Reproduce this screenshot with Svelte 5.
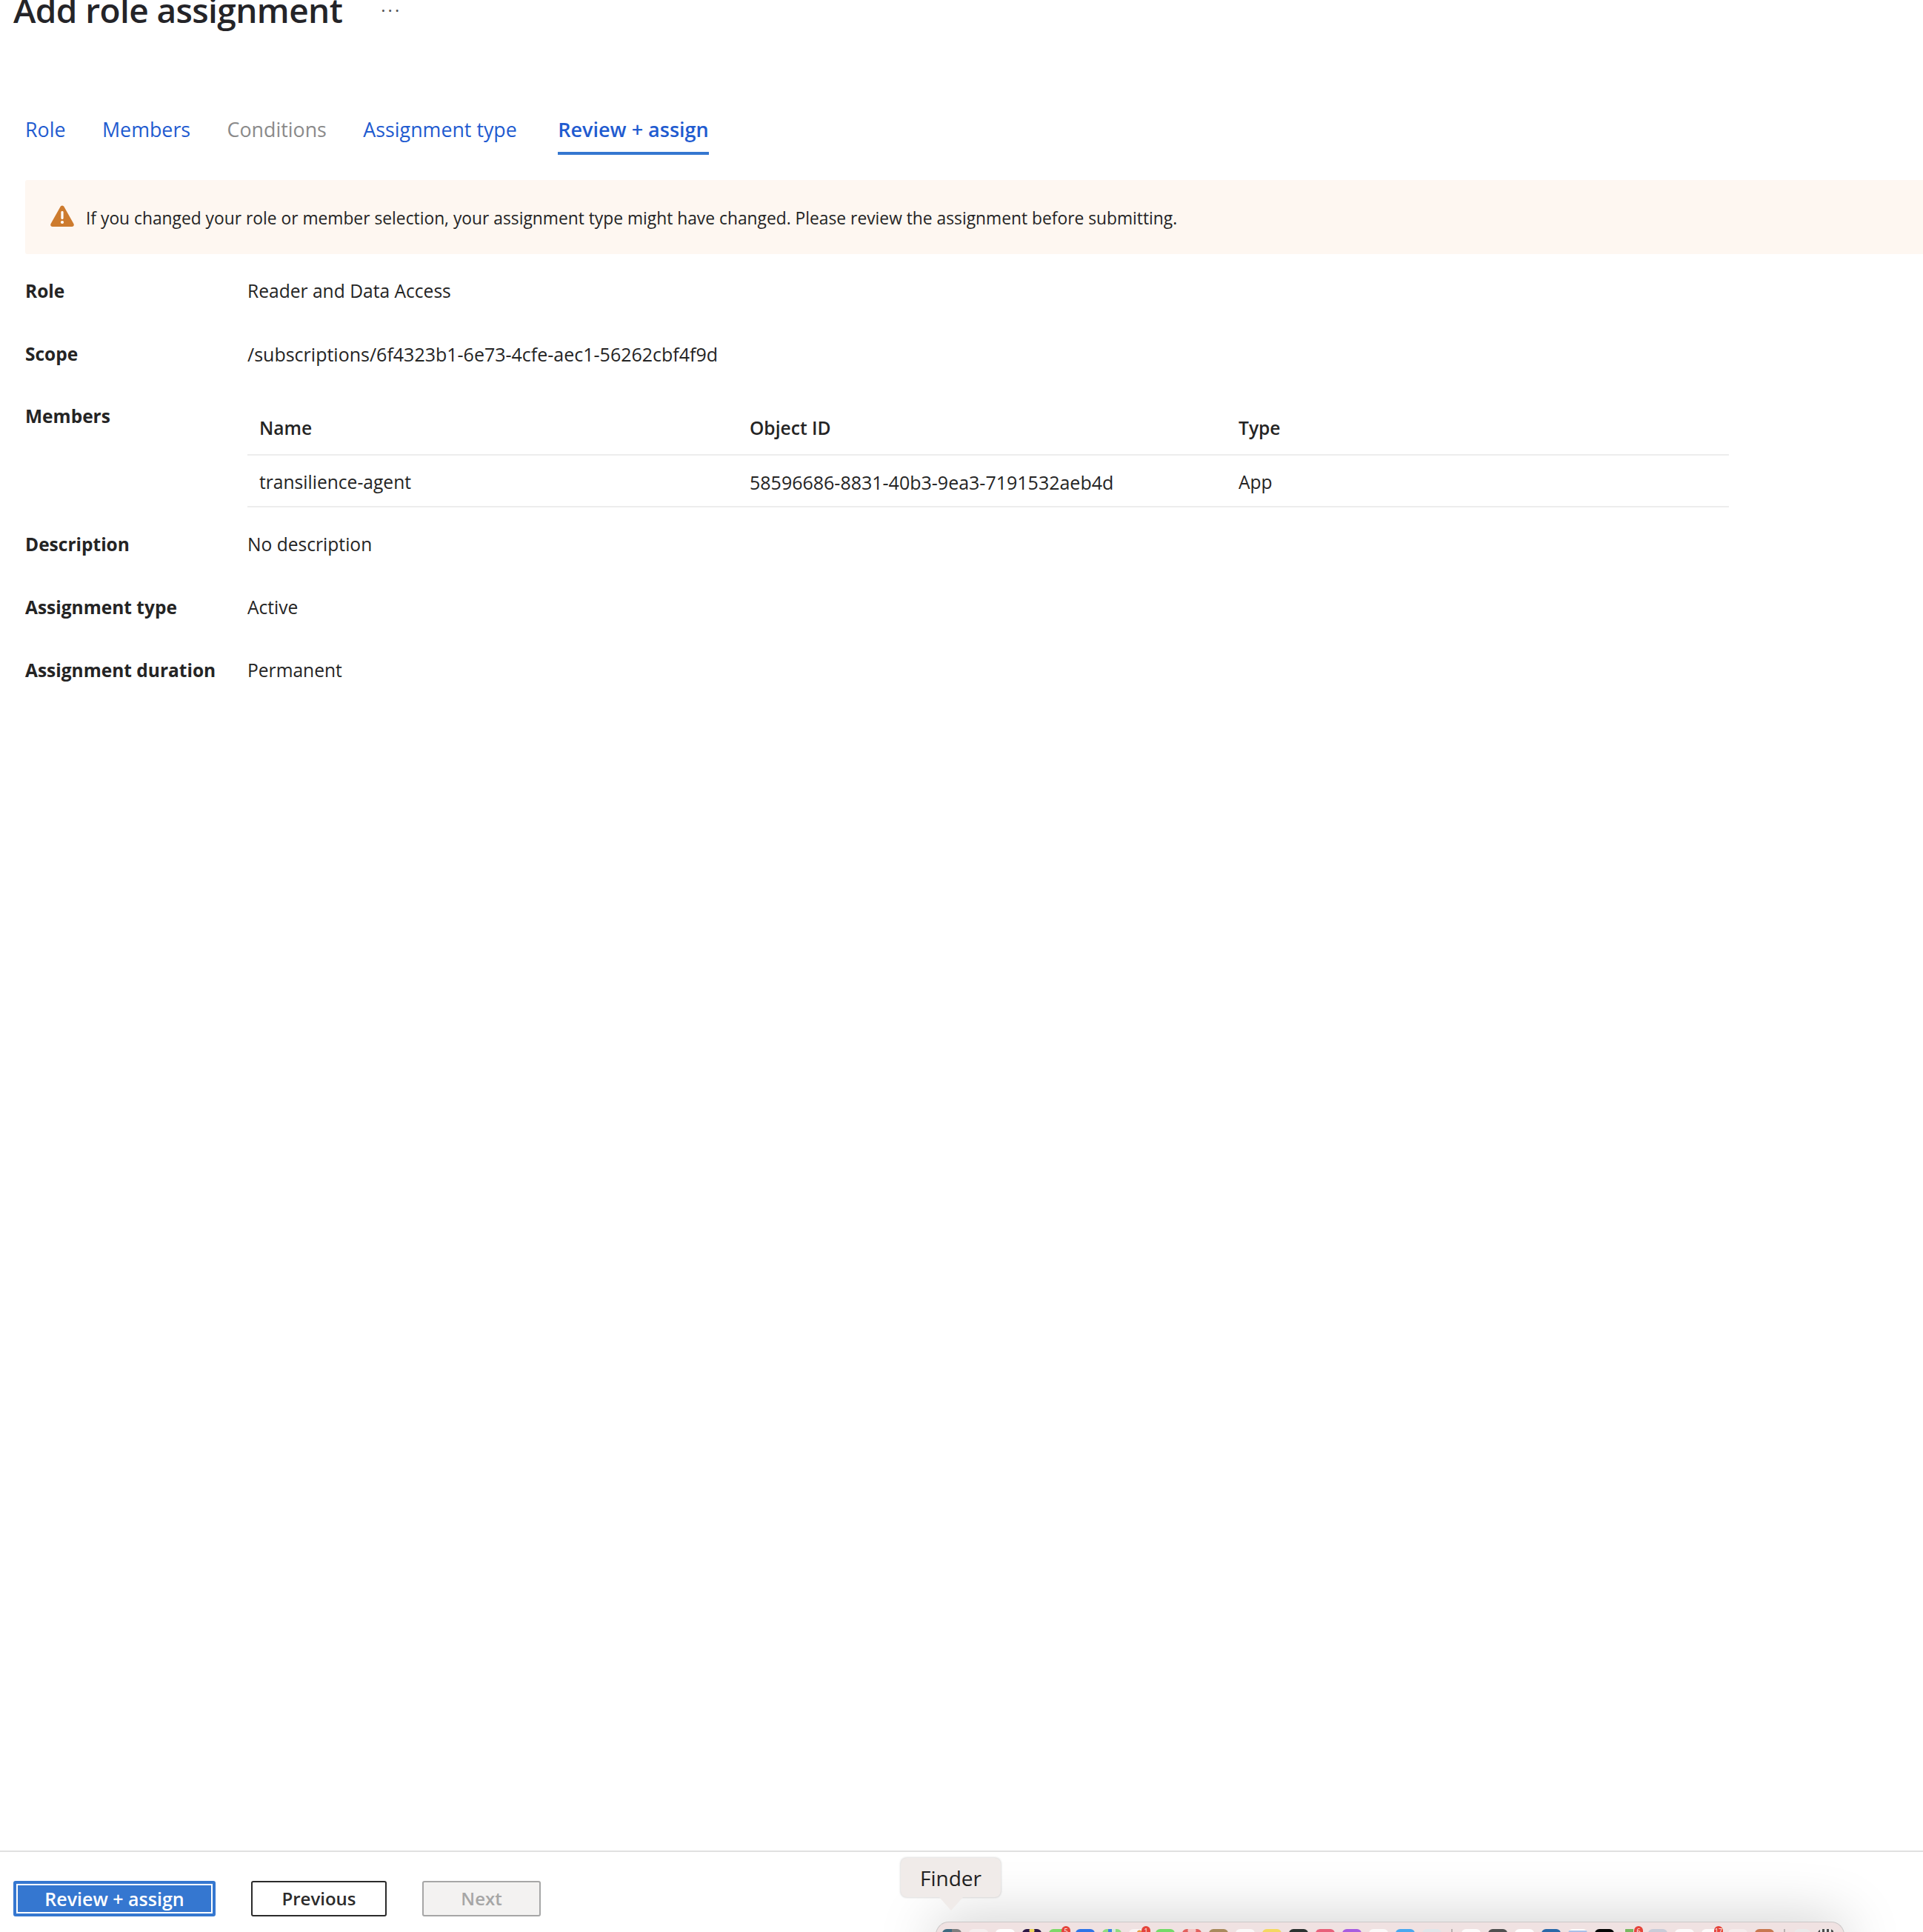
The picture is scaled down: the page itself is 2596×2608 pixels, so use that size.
<script lang="ts">
	// タブとレビュー内容のデータ
	const tabs = [
		{ label: 'Role', kind: 'link' },
		{ label: 'Members', kind: 'link' },
		{ label: 'Conditions', kind: 'off' },
		{ label: 'Assignment type', kind: 'link' },
		{ label: 'Review + assign', kind: 'active' }
	];

	// Dock のアイコン（画面下端で上の数ピクセルだけ見えている）
	type DockItem = { bg?: string; badge?: string; sep?: boolean; w?: number };

	const dock: DockItem[] = [
		{ bg: 'linear-gradient(90deg, #3e6a80 50%, #7e7e7e 50%)' },
		{ bg: '#f5efef' },
		{ bg: 'radial-gradient(circle at 50% 130%, #5a9ad8 0 10px, #fff 11px)' },
		{ bg: 'radial-gradient(circle at 50% 2px, #f0d860 0 3px, #2a1646 4px)' },
		{ bg: '#7ed868', badge: '5' },
		{ bg: '#2f74e8' },
		{ bg: 'linear-gradient(90deg, #8edc80 0 30%, #3a80e8 30% 50%, #d8e8d8 50% 70%, #8edc80 70%)' },
		{ bg: 'radial-gradient(circle at 55% 5px, #e89840 0 3px, #f8f4f4 4px)', badge: '1' },
		{ bg: '#74da68' },
		{ bg: 'radial-gradient(circle at 50% 2px, #f4c8c8 0 5px, #e25f5c 6px)' },
		{ bg: '#a88a5c' },
		{ bg: '#fbf9f9' },
		{ bg: '#f4d860' },
		{ bg: '#2c3230' },
		{ bg: '#e8607a' },
		{ bg: 'radial-gradient(circle at 50% 130%, #8040c0 0 8px, #a85ce0 9px)' },
		{ bg: '#fbf9f9' },
		{ bg: '#4aa8f0' },
		{ bg: 'radial-gradient(circle at 50% 130%, #222 0 10px, #dfe6ea 11px)' },
		{ sep: true },
		{ bg: '#fdfbfb' },
		{ bg: '#505050' },
		{ bg: 'radial-gradient(circle at 50% 130%, #111 0 10px, #fff 11px)' },
		{ bg: '#2a68a8' },
		{ bg: 'linear-gradient(#fff 0 2px, #a8c0e8 2px)' },
		{ bg: '#050505' },
		{ bg: 'linear-gradient(90deg, #f0e4e4 18%, #78b860 18% 60%, #f0e4e4 60%)', badge: '6' },
		{ bg: 'radial-gradient(circle at 50% 130%, #8c98c0 0 10px, #c8ccd8 11px)' },
		{ bg: '#fdfbfb' },
		{ bg: '#fdfbfb', badge: '17' },
		{ bg: '#f5eded' },
		{ bg: '#c87850' },
		{ sep: true },
		{ bg: '#eaeaea', w: 22 },
		{ bg: 'repeating-linear-gradient(90deg, #4a4a4a 0 3px, #e8e8e8 3px 6px)', w: 22 }
	];
</script>

<div class="page">
	<header class="title-row">
		<h1>Add role assignment</h1>
		<span class="more">···</span>
	</header>

	<nav class="tabs">
		{#each tabs as tab}
			<span class={tab.kind}>{tab.label}</span>
		{/each}
	</nav>

	<div class="banner">
		<svg width="32" height="29" viewBox="0 0 32 29">
			<path d="M16 0.5 C14.8 0.5 14 1.2 13.4 2.3 L0.6 25 C-0.4 27 0.6 29 3 29 L29 29 C31.4 29 32.4 27 31.4 25 L18.6 2.3 C18 1.2 17.2 0.5 16 0.5 Z" fill="#cd7b2e" />
			<rect x="14.4" y="8" width="3.2" height="11" rx="1.4" fill="#fff" />
			<circle cx="16" cy="23" r="2.1" fill="#fff" />
		</svg>
		<span class="message">If you changed your role or member selection, your assignment type might have changed. Please review the assignment before submitting.</span>
	</div>

	<div class="details">
		<div class="row"><b>Role</b><span>Reader and Data Access</span></div>
		<div class="row"><b>Scope</b><span class="id">/subscriptions/6f4323b1-6e73-4cfe-aec1-56262cbf4f9d</span></div>
		<div class="row members">
			<b>Members</b>
			<div class="table">
				<div class="tr head"><span>Name</span><span>Object ID</span><span>Type</span></div>
				<div class="tr"><span>transilience-agent</span><span class="id">58596686-8831-40b3-9ea3-7191532aeb4d</span><span>App</span></div>
			</div>
		</div>
		<div class="row"><b>Description</b><span>No description</span></div>
		<div class="row"><b>Assignment type</b><span>Active</span></div>
		<div class="row"><b>Assignment duration</b><span>Permanent</span></div>
	</div>

	<footer class="footer">
		<button class="primary"><span>Review + assign</span></button>
		<button class="secondary">Previous</button>
		<button class="disabled">Next</button>
	</footer>

	<!-- 画面下に写り込んだ macOS の Dock -->
	<div class="dock">
		{#each dock as item}
			{#if item.sep}
				<i class="sep"></i>
			{:else}
				<i class="app" style="background: {item.bg}; width: {item.w ?? 26}px">
					{#if item.badge}<em>{item.badge}</em>{/if}
				</i>
			{/if}
		{/each}
	</div>
	<div class="tooltip">Finder</div>
</div>

<style>
	:global(body) {
		margin: 0;
		background: #fff;
	}

	.page {
		position: relative;
		height: 2608px;
		overflow: hidden;
		display: flex;
		flex-direction: column;
		font-family: "Open Sans", "Noto Sans", sans-serif;
		font-size: 24.6px;
		color: #242424;
	}

	.title-row {
		display: flex;
		align-items: center;
		height: 40px;
		margin-top: -7px;
		padding-left: 18px;
	}

	h1 {
		margin: 0;
		font-size: 46px;
		font-weight: 600;
		color: #242428;
		letter-spacing: -0.6px;
	}

	.more {
		margin-left: 52px;
		color: #555;
		font-size: 24px;
		letter-spacing: 3px;
	}

	.tabs {
		display: flex;
		gap: 49.5px;
		margin: 122px 0 0 34px;
		font-size: 26.8px;
		height: 54px;
	}

	.tabs span {
		box-sizing: border-box;
		height: 54px;
		line-height: 40px;
	}

	.link {
		color: #1f5bd0;
	}

	.off {
		color: #8a8a8a;
	}

	.tabs .active {
		margin-left: 6px;
		color: #1f5bd0;
		font-size: 27px;
		font-weight: 600;
		border-bottom: 4px solid #3577d0;
	}

	.banner {
		display: flex;
		align-items: center;
		gap: 16px;
		height: 100px;
		margin: 34px 0 0 34px;
		padding-left: 34px;
		background: #fef7f1;
		border-radius: 3px 0 0 3px;
		font-size: 22.8px;
	}

	.banner svg {
		margin-bottom: 3px;
	}

	.message {
		margin-top: 2px;
	}

	.details {
		padding: 0 0 0 34px;
		margin-top: 7px;
	}

	.row {
		display: flex;
		height: 85px;
		align-items: center;
	}

	.row b {
		width: 300px;
		font-size: 24.5px;
		font-weight: 700;
		flex: none;
	}

	.id {
		font-size: 25px;
	}

	.row.members {
		height: 172px;
		align-items: flex-start;
	}

	.members b {
		margin-top: 25px;
	}

	.table {
		width: 2000px;
		margin-top: 21px;
	}

	.tr {
		display: grid;
		grid-template-columns: 662px 660px 1fr;
		padding: 3px 0 0 16px;
		height: 70px;
		box-sizing: border-box;
		align-items: center;
		border-bottom: 2px solid #ededed;
	}

	.tr.head {
		padding-top: 0;
		font-weight: 600;
		height: 74px;
	}

	.footer {
		margin-top: auto;
		height: 110px;
		box-sizing: border-box;
		border-top: 2px solid #e0e0e0;
		padding: 39px 0 0 18px;
		display: flex;
		align-items: flex-start;
		gap: 48px;
	}

	button {
		height: 48px;
		box-sizing: border-box;
		border-radius: 3px;
		font: 600 24px "Open Sans", "Noto Sans", sans-serif;
		padding: 0;
		line-height: 1;
	}

	.primary {
		width: 273px;
		background: #3577d0;
		border: 4px solid #3577d0;
		color: #fff;
		font-size: 25px;
	}

	.primary span {
		display: flex;
		align-items: center;
		justify-content: center;
		height: 100%;
		border: 2px solid #fff;
		box-sizing: border-box;
	}

	.secondary {
		width: 183px;
		background: #fff;
		border: 2px solid #2b2b2b;
		color: #2b2b2b;
	}

	.disabled {
		width: 160px;
		background: #f3f2f1;
		border: 2px solid #a6a6a6;
		color: #a6a6a6;
	}

	.tooltip {
		position: absolute;
		left: 1216px;
		top: 2508px;
		width: 135px;
		height: 53px;
		box-sizing: border-box;
		display: flex;
		align-items: center;
		justify-content: center;
		background: #f0ebe9;
		border-radius: 8px;
		box-shadow: 0 0 3px rgba(0, 0, 0, 0.25);
		font-size: 28px;
		color: #222;
	}

	.tooltip::after {
		content: "";
		position: absolute;
		left: 52px;
		top: 53px;
		width: 0;
		height: 0;
		border-left: 16px solid transparent;
		border-right: 16px solid transparent;
		border-top: 18px solid #f0ebe9;
	}

	.dock {
		position: absolute;
		left: 1263px;
		top: 2594px;
		width: 1227px;
		height: 60px;
		box-sizing: border-box;
		padding: 9px 0 0 8px;
		display: flex;
		gap: 10px;
		background: #f0e2e2;
		border: 1px solid #cbc7c7;
		border-bottom: 0;
		border-radius: 18px;
		box-shadow: 0 0 80px rgba(0, 0, 0, 0.22);
	}

	.app {
		position: relative;
		height: 26px;
		border-radius: 6px;
		flex: none;
	}

	.app em {
		position: absolute;
		top: -4px;
		right: -3px;
		min-width: 12px;
		height: 14px;
		border-radius: 7px;
		background: #e5443a;
		color: #fff;
		font: normal 9px/14px "Open Sans", sans-serif;
		text-align: center;
	}

	.sep {
		flex: none;
		width: 2px;
		height: 26px;
		margin: 0 2px 0 3px;
		background: #b8b0b0;
	}
</style>
